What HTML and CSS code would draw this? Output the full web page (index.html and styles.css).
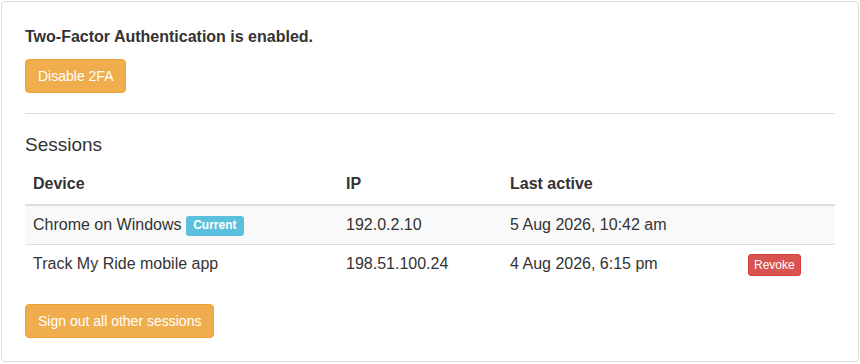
FILE: index.html
```html
<!DOCTYPE html>
<html lang="en">
<head>
    <title>Security Settings</title>
    <link rel="stylesheet" href="styles.css">
</head>
<body>
    <div class="panel">
        <p class="status">Two-Factor Authentication is enabled.</p>
        <button class="btn btn-warning">Disable 2FA</button>

        <hr>

        <h4 class="section-title">Sessions</h4>

        <table class="sessions-table">
            <thead>
                <tr>
                    <th class="col-device">Device</th>
                    <th class="col-ip">IP</th>
                    <th class="col-active">Last active</th>
                    <th class="col-action"></th>
                </tr>
            </thead>
            <tbody>
                <tr>
                    <td>Chrome on Windows <span class="label label-info">Current</span></td>
                    <td>192.0.2.10</td>
                    <td>5 Aug 2026, 10:42 am</td>
                    <td></td>
                </tr>
                <tr>
                    <td>Track My Ride mobile app</td>
                    <td>198.51.100.24</td>
                    <td>4 Aug 2026, 6:15 pm</td>
                    <td><button class="btn btn-danger btn-xs">Revoke</button></td>
                </tr>
            </tbody>
        </table>

        <button class="btn btn-warning">Sign out all other sessions</button>
    </div>
</body>
</html>
```

FILE: styles.css
```css
body {
    font-family: "Liberation Sans", Arial, sans-serif;
    font-size: 16px;
    line-height: 1.42857;
    color: #333;
    background-color: #fff;
    margin: 0;
}

.panel {
    margin: 1px;
    padding: 24px 23px 23px;
    border: 1px solid #ddd;
    border-radius: 4px;
}

.status {
    margin: 0 0 10px;
    font-weight: bold;
}

hr {
    margin: 20px 0 21px;
    border: 0;
    border-top: 1px solid #ddd;
}

.section-title {
    margin: 0 0 9px;
    font-size: 19px;
    font-weight: normal;
    line-height: 1.1;
}

.btn {
    display: inline-block;
    padding: 6px 12px;
    font-family: inherit;
    font-size: 14px;
    line-height: 20px;
    border: 1px solid transparent;
    border-radius: 4px;
    color: #fff;
    cursor: pointer;
}

.btn-warning {
    background-color: #f0ad4e;
    border-color: #eea236;
}

.btn-danger {
    background-color: #d9534f;
    border-color: #d43f3a;
}

.btn-xs {
    padding: 1px 5px;
    font-size: 12px;
    line-height: 1.5;
    border-radius: 3px;
}

.sessions-table {
    width: 100%;
    margin-bottom: 20px;
    border-collapse: collapse;
    border-spacing: 0;
}

.sessions-table th,
.sessions-table td {
    padding: 8px;
    text-align: left;
    vertical-align: top;
}

.sessions-table th {
    border-bottom: 2px solid #ddd;
    vertical-align: bottom;
}

.sessions-table td {
    border-top: 1px solid #ddd;
}

.sessions-table tbody tr:nth-child(odd) {
    background-color: #f9f9f9;
}

.col-device { width: 297px; }
.col-ip { width: 148px; }
.col-active { width: 222px; }

.label {
    display: inline;
    padding: .2em .6em .3em;
    font-size: 75%;
    font-weight: bold;
    line-height: 1;
    color: #fff;
    white-space: nowrap;
    vertical-align: baseline;
    border-radius: .25em;
}

.label-info {
    background-color: #5bc0de;
}
```
